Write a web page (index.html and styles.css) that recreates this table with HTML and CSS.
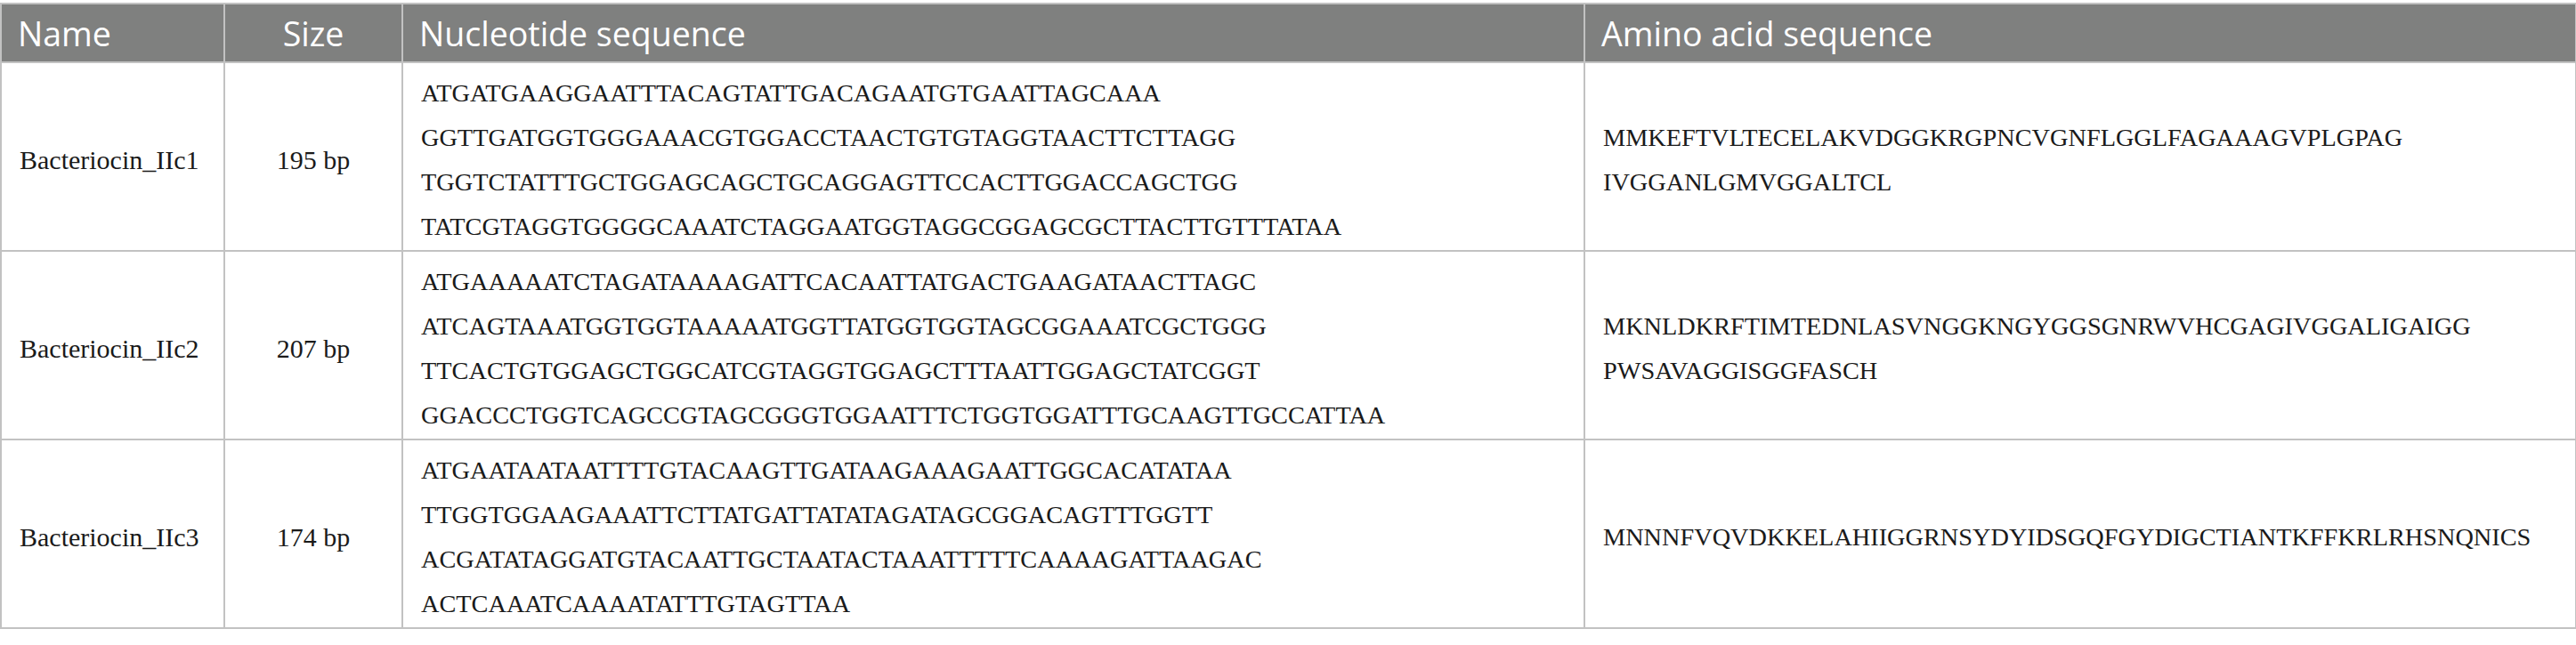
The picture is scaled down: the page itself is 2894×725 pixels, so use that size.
FILE: index.html
```html
<!DOCTYPE html>
<html lang="en">
<head>
<meta charset="utf-8">
<title>Bacteriocin sequences</title>
<link rel="stylesheet" href="styles.css">
</head>
<body>
<table class="seq-table">
  <colgroup>
    <col class="c-name">
    <col class="c-size">
    <col class="c-nuc">
    <col class="c-amino">
  </colgroup>
  <thead>
    <tr>
      <th class="h-left">Name</th>
      <th class="h-center">Size</th>
      <th class="h-left">Nucleotide sequence</th>
      <th class="h-left">Amino acid sequence</th>
    </tr>
  </thead>
  <tbody>
    <tr>
      <td class="name">Bacteriocin_IIc1</td>
      <td class="size">195 bp</td>
      <td class="seq">
        <div class="line">ATGATGAAGGAATTTACAGTATTGACAGAATGTGAATTAGCAAA</div>
        <div class="line">GGTTGATGGTGGGAAACGTGGACCTAACTGTGTAGGTAACTTCTTAGG</div>
        <div class="line">TGGTCTATTTGCTGGAGCAGCTGCAGGAGTTCCACTTGGACCAGCTGG</div>
        <div class="line">TATCGTAGGTGGGGCAAATCTAGGAATGGTAGGCGGAGCGCTTACTTGTTTATAA</div>
      </td>
      <td class="seq amino">
        <div class="line">MMKEFTVLTECELAKVDGGKRGPNCVGNFLGGLFAGAAAGVPLGPAG</div>
        <div class="line">IVGGANLGMVGGALTCL</div>
      </td>
    </tr>
    <tr>
      <td class="name">Bacteriocin_IIc2</td>
      <td class="size">207 bp</td>
      <td class="seq">
        <div class="line">ATGAAAAATCTAGATAAAAGATTCACAATTATGACTGAAGATAACTTAGC</div>
        <div class="line">ATCAGTAAATGGTGGTAAAAATGGTTATGGTGGTAGCGGAAATCGCTGGG</div>
        <div class="line">TTCACTGTGGAGCTGGCATCGTAGGTGGAGCTTTAATTGGAGCTATCGGT</div>
        <div class="line">GGACCCTGGTCAGCCGTAGCGGGTGGAATTTCTGGTGGATTTGCAAGTTGCCATTAA</div>
      </td>
      <td class="seq amino">
        <div class="line">MKNLDKRFTIMTEDNLASVNGGKNGYGGSGNRWVHCGAGIVGGALIGAIGG</div>
        <div class="line">PWSAVAGGISGGFASCH</div>
      </td>
    </tr>
    <tr>
      <td class="name">Bacteriocin_IIc3</td>
      <td class="size">174 bp</td>
      <td class="seq">
        <div class="line">ATGAATAATAATTTTGTACAAGTTGATAAGAAAGAATTGGCACATATAA</div>
        <div class="line">TTGGTGGAAGAAATTCTTATGATTATATAGATAGCGGACAGTTTGGTT</div>
        <div class="line">ACGATATAGGATGTACAATTGCTAATACTAAATTTTTCAAAAGATTAAGAC</div>
        <div class="line">ACTCAAATCAAAATATTTGTAGTTAA</div>
      </td>
      <td class="seq amino">
        <div class="line">MNNNFVQVDKKELAHIIGGRNSYDYIDSGQFGYDIGCTIANTKFFKRLRHSNQNICS</div>
      </td>
    </tr>
  </tbody>
</table>
</body>
</html>
```

FILE: styles.css
```css
html, body {
  margin: 0;
  padding: 0;
  background: #ffffff;
}

body {
  padding-top: 3px;
}

.seq-table {
  width: 2893px;
  border-collapse: collapse;
  table-layout: fixed;
  font-family: "Liberation Serif", "Times New Roman", serif;
  color: #1a1a1a;
}

.c-name { width: 251px; }
.c-size { width: 200px; }
.c-nuc { width: 1328px; }
.c-amino { width: 1114px; }

.seq-table th,
.seq-table td {
  border: 2px solid #c2c2c2;
}

.seq-table th {
  background: #7f807f;
  color: #ffffff;
  font-family: "Open Sans", "Noto Sans", sans-serif;
  font-weight: 400;
  font-size: 37.5px;
  line-height: 46px;
  height: 66px;
  padding: 2px 18px 0;
  box-sizing: border-box;
  vertical-align: middle;
}

.h-left { text-align: left; }
.h-center { text-align: center; }

.seq-table td {
  font-size: 28.3px;
  line-height: 50px;
  padding: 9px 20px 1px;
  vertical-align: middle;
  white-space: nowrap;
}

.seq-table td.name,
.seq-table td.size {
  font-size: 30px;
}

.name { text-align: left; }
.size { text-align: center; }
.seq { text-align: left; }

.line { display: block; }
```
